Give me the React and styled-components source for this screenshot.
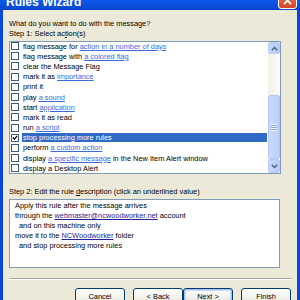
import styled, { createGlobalStyle } from 'styled-components';

const GlobalStyle = createGlobalStyle`
  html, body {
    margin: 0;
    padding: 0;
    overflow: hidden;
    background: #ece9d8;
  }
`;

const actions = [
  { text: 'flag message for ', link: 'action in a number of days' },
  { text: 'flag message with ', link: 'a colored flag' },
  { text: 'clear the Message Flag' },
  { text: 'mark it as ', link: 'importance' },
  { text: 'print it' },
  { text: 'play ', link: 'a sound' },
  { text: 'start ', link: 'application' },
  { text: 'mark it as read' },
  { text: 'run ', link: 'a script' },
  { text: 'stop processing more rules', checked: true },
  { text: 'perform ', link: 'a custom action' },
  { text: 'display ', link: 'a specific message', after: ' in the New Item Alert window' },
  { text: 'display a Desktop Alert' },
];

function Chevron({ down }) {
  return (
    <svg width="7" height="5" viewBox="0 0 7 5">
      <polyline
        points={down ? '0.8,0.8 3.5,3.6 6.2,0.8' : '0.8,4.2 3.5,1.4 6.2,4.2'}
        fill="none"
        stroke="#4d6185"
        strokeWidth="1.4"
      />
    </svg>
  );
}

function App() {
  return (
    <>
      <GlobalStyle />
      <Window>
        <TitleBar>
          <TitleText>Rules Wizard</TitleText>
          <CloseBtn>
            <svg width="9" height="9" viewBox="0 0 9 9">
              <path d="M1 1 L8 8 M8 1 L1 8" stroke="#fff" strokeWidth="1.8" />
            </svg>
          </CloseBtn>
        </TitleBar>
        <Content>
          <Label>What do you want to do with the message?</Label>
          <Label>
            Step 1: Select ac<u>t</u>ion(s)
          </Label>
          <ListBox>
            <Rows>
              {actions.map(a => (
                <Row key={a.text}>
                  <Check>
                    {a.checked && (
                      <svg width="7" height="7" viewBox="0 0 7 7">
                        <polyline points="1,3.5 2.8,5.3 6,1.5" fill="none" stroke="#000" strokeWidth="1.4" />
                      </svg>
                    )}
                  </Check>
                  <ItemText $selected={a.checked}>
                    {a.text}
                    {a.link && <ListLink>{a.link}</ListLink>}
                    {a.after}
                  </ItemText>
                </Row>
              ))}
            </Rows>
            <ScrollBar>
              <ScrollBtn $h={12}>
                <Chevron />
              </ScrollBtn>
              <Track $h={41} />
              <Thumb $h={64}>
                <Grip />
              </Thumb>
              <ScrollBtn $h={14}>
                <Chevron down />
              </ScrollBtn>
            </ScrollBar>
          </ListBox>
          <StepTwo>
            Step 2: Edit the rule <u>d</u>escription (click an underlined value)
          </StepTwo>
          <DescBox>
            <DescLine>Apply this rule after the message arrives</DescLine>
            <DescLine>
              through the <DescLink>webmaster@ncwoodworker.net</DescLink> account
            </DescLine>
            <DescLine $indent>and on this machine only</DescLine>
            <DescLine>
              move it to the <DescLink>NCWoodworker</DescLink> folder
            </DescLine>
            <DescLine $indent>and stop processing more rules</DescLine>
          </DescBox>
          <Separator />
          <ButtonRow>
            <Button>Cancel</Button>
            <Button $gap={8}>&lt; Back</Button>
            <Button $default>Next &gt;</Button>
            <Button $gap={8}>Finish</Button>
          </ButtonRow>
        </Content>
      </Window>
    </>
  );
}

export default App;

const Window = styled.div`
  width: 300px;
  height: 330px;
  margin-top: -10px;
  box-sizing: border-box;
  border-left: 3px solid #0a47d8;
  border-right: 3px solid #0a47d8;
  background: #ece9d8;
  font-family: 'Liberation Sans', Arial, sans-serif;
  font-size: 7.4px;
  color: #000;
`;

const TitleBar = styled.div`
  display: flex;
  align-items: center;
  justify-content: space-between;
  height: 20px;
  margin: 0 -3px;
  padding: 0 3px 0 6px;
  background: linear-gradient(#2a6af0, #0b55e6 60%, #0a46cc);
`;

const TitleText = styled.div`
  padding-top: 4px;
  color: #fff;
  font-size: 12px;
  font-weight: 700;
  line-height: 1;
`;

const CloseBtn = styled.div`
  display: flex;
  align-items: center;
  justify-content: center;
  width: 19px;
  height: 17px;
  box-sizing: border-box;
  border: 1px solid #fff;
  border-radius: 3px;
  background: linear-gradient(#e8734f, #d6461f);
`;

const Content = styled.div`
  display: flex;
  flex-direction: column;
  padding: 9px 0 0 6px;
`;

const Label = styled.div`
  line-height: 10px;
  white-space: nowrap;
`;

const ListBox = styled.div`
  display: flex;
  width: 272px;
  height: 133px;
  margin-top: 2px;
  box-sizing: border-box;
  border: 1px solid #7f9db9;
  background: #fff;
  overflow: hidden;
`;

const Rows = styled.div`
  flex: 1;
  margin-top: -1px;
  padding-left: 1px;
  overflow: hidden;
`;

const Row = styled.div`
  display: flex;
  align-items: center;
  height: 10.2px;
  white-space: nowrap;
`;

const Check = styled.div`
  display: flex;
  align-items: center;
  justify-content: center;
  flex: none;
  width: 8px;
  height: 8px;
  box-sizing: border-box;
  border: 1px solid #3d5a7c;
  background: #fff;
`;

const ItemText = styled.div`
  flex: 1;
  margin: 0 1px 0 3px;
  padding-left: 1px;
  line-height: 9px;
  background: ${p => (p.$selected ? '#316ac5' : 'transparent')};
  color: ${p => (p.$selected ? '#fff' : '#000')};
`;

const ListLink = styled.span`
  color: #3a6bd8;
  text-decoration: underline;
`;

const ScrollBar = styled.div`
  display: flex;
  flex-direction: column;
  flex: none;
  width: 12px;
`;

const ScrollBtn = styled.div`
  display: flex;
  align-items: center;
  justify-content: center;
  height: ${p => p.$h}px;
  box-sizing: border-box;
  border: 1px solid #b9cbf4;
  border-radius: 2px;
  background: linear-gradient(90deg, #c9d8fc, #b7cbf6);
`;

const Track = styled.div`
  height: ${p => p.$h}px;
  background: linear-gradient(90deg, #f1efe6, #fdfdf8);
`;

const Thumb = styled.div`
  display: flex;
  align-items: center;
  justify-content: center;
  height: ${p => p.$h}px;
  box-sizing: border-box;
  border: 1px solid #b3c6f3;
  border-radius: 2px;
  background: linear-gradient(90deg, #cbd9fc, #bccff8);
`;

const Grip = styled.div`
  width: 6px;
  height: 7px;
  background: repeating-linear-gradient(#eef3fe 0 1px, #8ca6e4 1px 2px);
`;

const StepTwo = styled(Label)`
  margin-top: 13px;
`;

const DescBox = styled.div`
  width: 271px;
  height: 69px;
  margin-top: 2px;
  padding: 1px 0 0 5px;
  box-sizing: border-box;
  border: 1px solid #7f9db9;
  background: #fff;
`;

const DescLine = styled.div`
  padding-left: ${p => (p.$indent ? 4 : 0)}px;
  line-height: 10px;
  white-space: nowrap;
`;

const DescLink = styled.span`
  color: #24249a;
  text-decoration: underline;
`;

const Separator = styled.div`
  width: 283px;
  height: 1px;
  margin-top: 10px;
  border-bottom: 1px solid #fff;
  background: #aca899;
`;

const ButtonRow = styled.div`
  display: flex;
  padding-left: 66px;
  margin-top: 8px;
`;

const Button = styled.div`
  display: flex;
  align-items: center;
  justify-content: center;
  width: 50px;
  height: 16px;
  margin-left: ${p => p.$gap || 0}px;
  box-sizing: border-box;
  border: 1px solid #003c74;
  border-radius: 3px;
  background: linear-gradient(#ffffff, #f0f0ea 70%, #d6d0c5);
  box-shadow: ${p => (p.$default ? 'inset 0 0 0 1px #a8bdf0, inset 0 0 0 2px #cedaf8' : 'none')};
`;
